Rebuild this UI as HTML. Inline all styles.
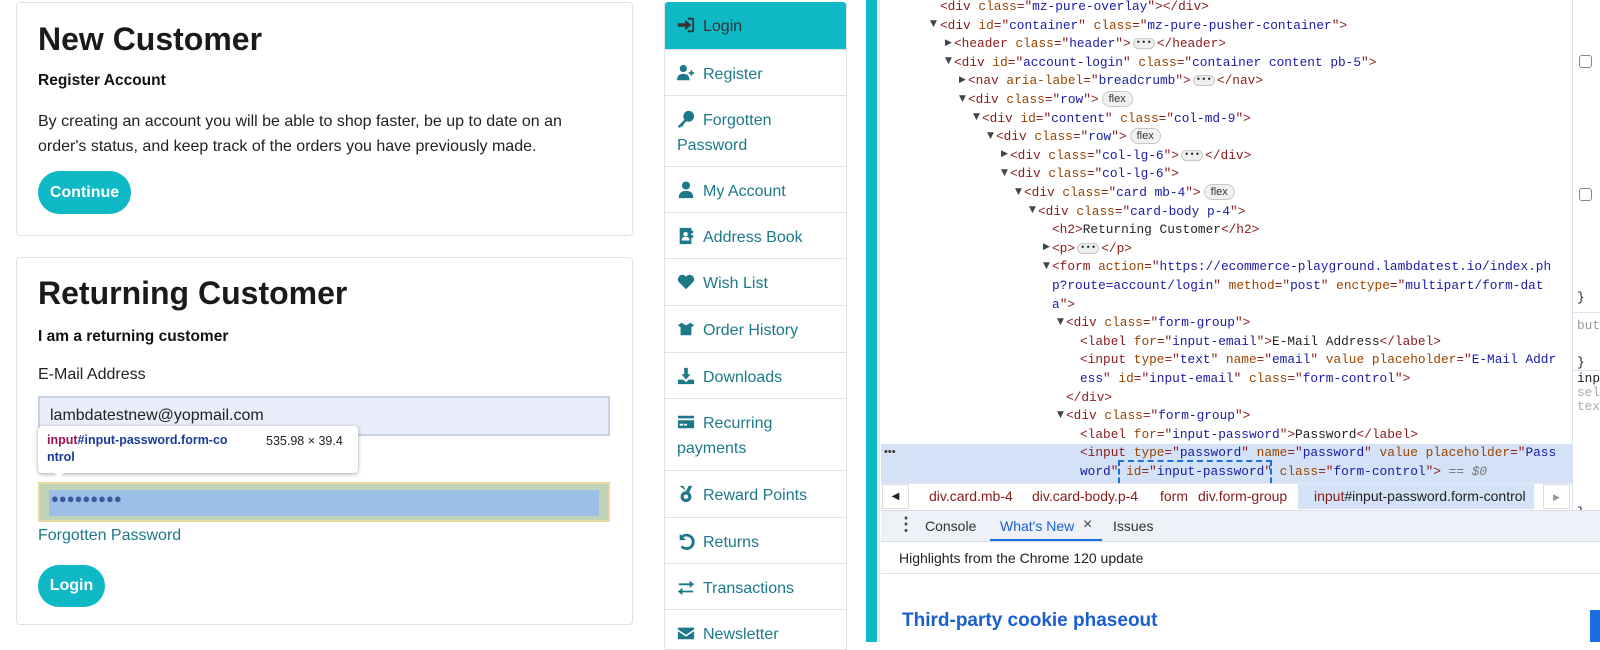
<!DOCTYPE html>
<html><head><meta charset="utf-8"><style>
*{box-sizing:border-box;margin:0;padding:0}
body{width:1600px;height:642px;overflow:hidden;background:#fff;font-family:"Liberation Sans",sans-serif;position:relative;color:#222}
.abs{position:absolute;white-space:nowrap}
.card{position:absolute;left:16px;width:617px;border:1px solid #dfe2e5;border-radius:4px;background:#fff}
.btn{position:absolute;background:#0eb9c5;color:#fff;font-weight:bold;font-size:16px;border-radius:22px;display:flex;align-items:center;justify-content:center}
.side{position:absolute;left:664px;width:183px;top:2px;border:1px solid #e2e2e2;border-top:none}
.it{border-top:1px solid #e2e2e2;color:#1d7889;font-size:16px;padding:12px 12px 0 12px;line-height:25px;position:relative}
.it svg{width:18px;height:18px;vertical-align:-3px;margin-right:8px;fill:#1d7889}
.code{font-family:"Liberation Mono",monospace;font-size:12.8px;position:absolute;white-space:pre;line-height:18px;color:#222}
.t{color:#881a1a}.a{color:#994500}.v{color:#1a1aa6}
.tri{position:absolute;font-size:9px;color:#444;font-family:"DejaVu Sans",sans-serif}
.pill{display:inline-block;border:1px solid #c8c8c8;background:#f1f1f1;border-radius:9px;font-size:11px;padding:0 6px;line-height:14px;color:#333;font-family:"Liberation Sans",sans-serif;vertical-align:1px;margin-left:3px}
.dots{display:inline-block;border:1px solid #c8c8c8;background:#eee;border-radius:6px;font-size:9px;line-height:9px;padding:0 2px;vertical-align:2px;margin:0 2px;color:#333}
</style></head><body>

<div class="card" style="top:2px;height:234px"></div>
<div class="abs" style="left:38px;top:21px;font-size:32px;font-weight:bold;color:#1a1a1a">New Customer</div>
<div class="abs" style="left:38px;top:72px;font-size:15.5px;font-weight:bold;color:#111">Register Account</div>
<div class="abs" style="left:38px;top:109px;font-size:16px;line-height:25px;color:#222;white-space:normal;width:560px">By creating an account you will be able to shop faster, be up to date on an order's status, and keep track of the orders you have previously made.</div>
<div class="btn" style="left:38px;top:171px;width:93px;height:43px">Continue</div>

<div class="card" style="top:257px;height:368px"></div>
<div class="abs" style="left:38px;top:275px;font-size:32px;font-weight:bold;color:#1a1a1a">Returning Customer</div>
<div class="abs" style="left:38px;top:328px;font-size:15.5px;font-weight:bold;color:#111">I am a returning customer</div>
<div class="abs" style="left:38px;top:366px;font-size:16px;color:#222">E-Mail Address</div>
<div class="abs" style="left:38px;top:396px;width:572px;height:40px;background:#e9eefa;border:2px solid #c6d1e0"></div>
<div class="abs" style="left:50px;top:407px;font-size:16px;color:#222">lambdatestnew@yopmail.com</div>
<div class="abs" style="left:38px;top:482px;width:572px;height:40px;background:#c1d3b6;border:2px solid #e8d9a0"></div>
<div class="abs" style="left:49px;top:490px;width:550px;height:26px;background:#9bbfe6"></div>
<div class="abs" style="left:51px;top:491px;font-size:13px;color:#3a5a9a;letter-spacing:0px">●●●●●●●●●</div>
<div class="abs" style="left:38px;top:426px;width:320px;height:47px;background:#fff;border-radius:4px;box-shadow:0 1px 4px rgba(0,0,0,.35)"></div>
<div class="abs" style="left:52px;top:470px;width:0;height:0;border-left:7px solid transparent;border-right:7px solid transparent;border-top:8px solid #fff"></div>
<div class="abs" style="left:47px;top:432px;font-size:12.5px;line-height:17px;font-weight:bold;color:#1a3a99"><span style="color:#9b1050">input</span>#input-password.form-co<br>ntrol</div>
<div class="abs" style="left:266px;top:434px;font-size:12.5px;color:#222">535.98 × 39.4</div>
<div class="abs" style="left:38px;top:527px;font-size:16px;color:#1d7889">Forgotten Password</div>
<div class="btn" style="left:38px;top:565px;width:67px;height:42px">Login</div>

<div class="side">
<div class="it" style="border-top:none;background:#0eb9c5;color:#333;height:47px;border-radius:3px 3px 0 0"><svg viewBox="0 0 20 20" style="fill:#333"><path d="M1 8h8V4l7 6-7 6v-4H1z"/><path d="M12 2h5a2 2 0 012 2v12a2 2 0 01-2 2h-5v-2h5V4h-5z"/></svg>Login</div>
<div class="it" style="height:46px"><svg viewBox="0 0 20 20"><circle cx="7" cy="5" r="4"/><path d="M0 18c0-5 3-7 7-7s7 2 7 7z"/><path d="M15 7h2v2h2v2h-2v2h-2v-2h-2V9h2z"/></svg>Register</div>
<div class="it" style="height:71px"><svg viewBox="0 0 20 20"><circle cx="13" cy="7" r="6"/><path d="M9 10L1 18l2 2 2-2 2 0 0-2 4-4z"/></svg>Forgotten<br>Password</div>
<div class="it" style="height:46px"><svg viewBox="0 0 20 20"><circle cx="10" cy="5" r="4.5"/><path d="M2 19c0-6 3-8 8-8s8 2 8 8z"/></svg>My Account</div>
<div class="it" style="height:46px"><svg viewBox="0 0 20 20"><path d="M3 1h13v18H3z"/><circle cx="9.5" cy="8" r="2.5" fill="#fff"/><path d="M5 15c0-3 2-4 4.5-4s4.5 1 4.5 4z" fill="#fff"/><path d="M16 4h2v3h-2zM16 9h2v3h-2z"/></svg>Address Book</div>
<div class="it" style="height:47px"><svg viewBox="0 0 20 20"><path d="M10 18L2 10a5 5 0 018-6 5 5 0 018 6z"/></svg>Wish List</div>
<div class="it" style="height:47px"><svg viewBox="0 0 20 20"><path d="M1 6l4-3 5 3 5-3 4 3-3 2v9H4V8z"/></svg>Order History</div>
<div class="it" style="height:46px"><svg viewBox="0 0 20 20"><path d="M8 1h4v7h3l-5 6-5-6h3z"/><path d="M1 14h6l3 3 3-3h6v5H1z"/></svg>Downloads</div>
<div class="it" style="height:72px"><svg viewBox="0 0 20 20"><path d="M1 3h18v3H1zM1 8h18v9H1z"/><path d="M3 12h4v2H3zM8 12h3v2H8z" fill="#fff"/></svg>Recurring<br>payments</div>
<div class="it" style="height:47px"><svg viewBox="0 0 20 20"><path d="M3 1h4l3 6 3-6h4l-4 8z"/><circle cx="10" cy="13" r="6"/><circle cx="10" cy="13" r="2.5" fill="#fff"/></svg>Reward Points</div>
<div class="it" style="height:46px"><svg viewBox="0 0 20 20"><path d="M3 2v7h7L7 6a6 6 0 11-1 9l-2 2a9 9 0 101-13z"/></svg>Returns</div>
<div class="it" style="height:46px"><svg viewBox="0 0 20 20"><path d="M2 6h12V3l5 4-5 4V8H2zM18 14H6v-3l-5 4 5 4v-3h12z"/></svg>Transactions</div>
<div class="it" style="height:40px"><svg viewBox="0 0 20 20"><path d="M1 4h18v2l-9 6-9-6zM1 8l9 6 9-6v9H1z"/></svg>Newsletter</div>
</div>

<div class="abs" style="left:866px;top:0;width:11px;height:642px;background:#0eb9c5"></div>
<div class="abs" style="left:877px;top:0;width:3px;height:642px;background:#f3f3f3;border-right:1px solid #dde"></div>

<div class="abs" style="left:881px;top:444px;width:691px;height:39px;background:#d4e2f7"></div>
<div class="abs" style="left:884px;top:446px;font-size:11px;color:#333">•••</div>

<div class="code" style="left:0;top:0">
<div class="abs" style="left:940px;top:-2px"><span class="t">&lt;div </span><span class="a">class</span><span class="t">="</span><span class="v">mz-pure-overlay</span><span class="t">"&gt;&lt;/div&gt;</span></div>
<div class="abs" style="left:940px;top:16.6px"><span class="t">&lt;div </span><span class="a">id</span><span class="t">="</span><span class="v">container</span><span class="t">" </span><span class="a">class</span><span class="t">="</span><span class="v">mz-pure-pusher-container</span><span class="t">"&gt;</span></div>
<div class="abs" style="left:954px;top:35.2px"><span class="t">&lt;header </span><span class="a">class</span><span class="t">="</span><span class="v">header</span><span class="t">"&gt;</span><span class="dots">•••</span><span class="t">&lt;/header&gt;</span></div>
<div class="abs" style="left:954px;top:53.8px"><span class="t">&lt;div </span><span class="a">id</span><span class="t">="</span><span class="v">account-login</span><span class="t">" </span><span class="a">class</span><span class="t">="</span><span class="v">container content pb-5</span><span class="t">"&gt;</span></div>
<div class="abs" style="left:968px;top:72.4px"><span class="t">&lt;nav </span><span class="a">aria-label</span><span class="t">="</span><span class="v">breadcrumb</span><span class="t">"&gt;</span><span class="dots">•••</span><span class="t">&lt;/nav&gt;</span></div>
<div class="abs" style="left:968px;top:91px"><span class="t">&lt;div </span><span class="a">class</span><span class="t">="</span><span class="v">row</span><span class="t">"&gt;</span><span class="pill">flex</span></div>
<div class="abs" style="left:982px;top:109.6px"><span class="t">&lt;div </span><span class="a">id</span><span class="t">="</span><span class="v">content</span><span class="t">" </span><span class="a">class</span><span class="t">="</span><span class="v">col-md-9</span><span class="t">"&gt;</span></div>
<div class="abs" style="left:996px;top:128.2px"><span class="t">&lt;div </span><span class="a">class</span><span class="t">="</span><span class="v">row</span><span class="t">"&gt;</span><span class="pill">flex</span></div>
<div class="abs" style="left:1010px;top:146.8px"><span class="t">&lt;div </span><span class="a">class</span><span class="t">="</span><span class="v">col-lg-6</span><span class="t">"&gt;</span><span class="dots">•••</span><span class="t">&lt;/div&gt;</span></div>
<div class="abs" style="left:1010px;top:165.4px"><span class="t">&lt;div </span><span class="a">class</span><span class="t">="</span><span class="v">col-lg-6</span><span class="t">"&gt;</span></div>
<div class="abs" style="left:1024px;top:184px"><span class="t">&lt;div </span><span class="a">class</span><span class="t">="</span><span class="v">card mb-4</span><span class="t">"&gt;</span><span class="pill">flex</span></div>
<div class="abs" style="left:1038px;top:202.6px"><span class="t">&lt;div </span><span class="a">class</span><span class="t">="</span><span class="v">card-body p-4</span><span class="t">"&gt;</span></div>
<div class="abs" style="left:1052px;top:221.2px"><span class="t">&lt;h2&gt;</span>Returning Customer<span class="t">&lt;/h2&gt;</span></div>
<div class="abs" style="left:1052px;top:239.8px"><span class="t">&lt;p&gt;</span><span class="dots">•••</span><span class="t">&lt;/p&gt;</span></div>
<div class="abs" style="left:1052px;top:258.4px"><span class="t">&lt;form </span><span class="a">action</span><span class="t">="</span><span class="v">https://ecommerce-playground.lambdatest.io/index.ph</span></div>
<div class="abs" style="left:1052px;top:277px"><span class="v">p?route=account/login</span><span class="t">" </span><span class="a">method</span><span class="t">="</span><span class="v">post</span><span class="t">" </span><span class="a">enctype</span><span class="t">="</span><span class="v">multipart/form-dat</span></div>
<div class="abs" style="left:1052px;top:295.6px"><span class="v">a</span><span class="t">"&gt;</span></div>
<div class="abs" style="left:1066px;top:314.2px"><span class="t">&lt;div </span><span class="a">class</span><span class="t">="</span><span class="v">form-group</span><span class="t">"&gt;</span></div>
<div class="abs" style="left:1080px;top:332.8px"><span class="t">&lt;label </span><span class="a">for</span><span class="t">="</span><span class="v">input-email</span><span class="t">"&gt;</span>E-Mail Address<span class="t">&lt;/label&gt;</span></div>
<div class="abs" style="left:1080px;top:351.4px"><span class="t">&lt;input </span><span class="a">type</span><span class="t">="</span><span class="v">text</span><span class="t">" </span><span class="a">name</span><span class="t">="</span><span class="v">email</span><span class="t">" </span><span class="a">value placeholder</span><span class="t">="</span><span class="v">E-Mail Addr</span></div>
<div class="abs" style="left:1080px;top:370px"><span class="v">ess</span><span class="t">" </span><span class="a">id</span><span class="t">="</span><span class="v">input-email</span><span class="t">" </span><span class="a">class</span><span class="t">="</span><span class="v">form-control</span><span class="t">"&gt;</span></div>
<div class="abs" style="left:1066px;top:388.6px"><span class="t">&lt;/div&gt;</span></div>
<div class="abs" style="left:1066px;top:407.2px"><span class="t">&lt;div </span><span class="a">class</span><span class="t">="</span><span class="v">form-group</span><span class="t">"&gt;</span></div>
<div class="abs" style="left:1080px;top:425.8px"><span class="t">&lt;label </span><span class="a">for</span><span class="t">="</span><span class="v">input-password</span><span class="t">"&gt;</span>Password<span class="t">&lt;/label&gt;</span></div>
<div class="abs" style="left:1080px;top:444.4px"><span class="t">&lt;input </span><span class="a">type</span><span class="t">="</span><span class="v">password</span><span class="t">" </span><span class="a">name</span><span class="t">="</span><span class="v">password</span><span class="t">" </span><span class="a">value placeholder</span><span class="t">="</span><span class="v">Pass</span></div>
<div class="abs" style="left:1080px;top:463px"><span class="v">word</span><span class="t">" </span><span class="a">id</span><span class="t">="</span><span class="v">input-password</span><span class="t">" </span><span class="a">class</span><span class="t">="</span><span class="v">form-control</span><span class="t">"&gt;</span> <span style="color:#777">== <i>$0</i></span></div>
</div>
<div class="tri" style="left:930px;top:19px">▼</div>
<div class="tri" style="left:945px;top:38px">▶</div>
<div class="tri" style="left:945px;top:56px">▼</div>
<div class="tri" style="left:959px;top:75px">▶</div>
<div class="tri" style="left:959px;top:94px">▼</div>
<div class="tri" style="left:973px;top:112px">▼</div>
<div class="tri" style="left:987px;top:131px">▼</div>
<div class="tri" style="left:1001px;top:149px">▶</div>
<div class="tri" style="left:1001px;top:168px">▼</div>
<div class="tri" style="left:1015px;top:187px">▼</div>
<div class="tri" style="left:1029px;top:205px">▼</div>
<div class="tri" style="left:1043px;top:242px">▶</div>
<div class="tri" style="left:1043px;top:261px">▼</div>
<div class="tri" style="left:1057px;top:317px">▼</div>
<div class="tri" style="left:1057px;top:410px">▼</div>

<div class="abs" style="left:1118px;top:460px;width:154px;height:32px;border:2px dashed #1a6fe0"></div>

<div class="abs" style="left:881px;top:483px;width:691px;height:27px;background:#fff;border-top:1px solid #e4e8f0"></div>
<div class="abs" style="left:882px;top:484px;width:27px;height:25px;border:1px solid #ddd;background:#fff;font-size:10px;text-align:center;line-height:24px;color:#222">◀</div>
<div class="abs" style="left:1298px;top:484px;width:236px;height:25px;background:#d4e2f7"></div>
<div class="abs" style="left:929px;top:488px;font-size:14px;color:#881a1a">div.card.mb-4</div>
<div class="abs" style="left:1032px;top:488px;font-size:14px;color:#881a1a">div.card-body.p-4</div>
<div class="abs" style="left:1160px;top:488px;font-size:14px;color:#881a1a">form</div>
<div class="abs" style="left:1198px;top:488px;font-size:14px;color:#881a1a">div.form-group</div>
<div class="abs" style="left:1314px;top:488px;font-size:14px;color:#222"><span style="color:#881a1a">input</span>#input-password.form-control</div>
<div class="abs" style="left:1543px;top:484px;width:27px;height:25px;border:1px solid #ddd;background:#fff;font-size:9px;text-align:center;line-height:24px;color:#999">▶</div>

<div class="abs" style="left:1572px;top:0;width:28px;height:510px;border-left:1px solid #dde3ee;background:#fff"></div>
<div class="abs" style="left:1579px;top:55px;width:13px;height:13px;border:1px solid #888;border-radius:3px"></div>
<div class="abs" style="left:1579px;top:188px;width:13px;height:13px;border:1px solid #888;border-radius:3px"></div>
<div class="abs" style="left:1577px;top:290px;font-family:'Liberation Mono',monospace;font-size:12.8px">}</div>
<div class="abs" style="left:1573px;top:312px;width:27px;border-top:1px solid #dde3ee"></div>
<div class="abs" style="left:1577px;top:318px;font-family:'Liberation Mono',monospace;font-size:12.8px;color:#999">but</div>
<div class="abs" style="left:1577px;top:355px;font-family:'Liberation Mono',monospace;font-size:12.8px">}</div>
<div class="abs" style="left:1573px;top:370px;width:27px;border-top:1px solid #dde3ee"></div>
<div class="abs" style="left:1577px;top:372px;font-family:'Liberation Mono',monospace;font-size:12.8px;line-height:14px">inp<br><span style="color:#aaa">sel<br>tex</span></div>
<div class="abs" style="left:1577px;top:505px;font-family:'Liberation Mono',monospace;font-size:12.8px">}</div>

<div class="abs" style="left:881px;top:510px;width:719px;height:32px;background:#eef1f8;border-top:1px solid #d8dde8;border-bottom:1px solid #d8dde8"></div>
<div class="abs" style="left:897px;top:514px;font-size:18px;font-weight:bold;color:#444">⋮</div>
<div class="abs" style="left:925px;top:518px;font-size:14px;color:#333">Console</div>
<div class="abs" style="left:1000px;top:518px;font-size:14px;color:#1a5fd0">What's New</div>
<div class="abs" style="left:1083px;top:516px;font-size:16px;color:#444">×</div>
<div class="abs" style="left:1113px;top:518px;font-size:14px;color:#333">Issues</div>
<div class="abs" style="left:990px;top:539px;width:112px;height:2px;background:#1a6fe0"></div>
<div class="abs" style="left:899px;top:550px;font-size:14px;color:#222">Highlights from the Chrome 120 update</div>
<div class="abs" style="left:881px;top:573px;width:719px;border-top:1px solid #dde3ee"></div>
<div class="abs" style="left:902px;top:610px;font-size:19px;font-weight:bold;color:#1a5fd0">Third-party cookie phaseout</div>
<div class="abs" style="left:1590px;top:610px;width:10px;height:32px;background:#1a6fe0"></div>
</body></html>
